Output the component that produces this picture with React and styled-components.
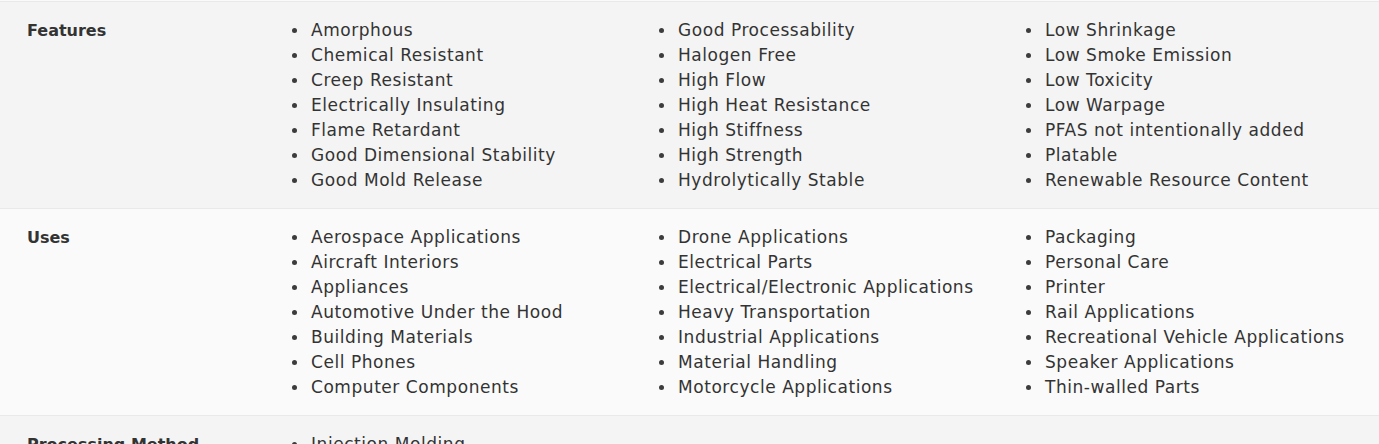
import React from 'react'
import styled, { createGlobalStyle } from 'styled-components'

const GlobalStyle = createGlobalStyle`
  html, body {
    margin: 0;
    padding: 0;
    background: #fafafa;
  }
  body {
    font-family: "DejaVu Sans", "Noto Sans", sans-serif;
    color: #333333;
  }
`

const Table = styled.div`
  padding-top: 1px;
  background: #fafafa;
`

const Row = styled.div`
  display: flex;
  align-items: flex-start;
  padding: 16px 27px 15px;
  border-top: 1px solid #e9e9e9;
  background: ${p => (p.$shade ? '#f4f4f4' : '#fafafa')};
`

const Label = styled.div`
  flex: 0 0 284px;
  font-size: 16px;
  line-height: 25px;
  font-weight: 600;
  color: #333333;
`

const List = styled.ul`
  margin: 0;
  padding: 0;
  list-style: none;
  display: grid;
  grid-template-columns: repeat(3, 367px);
  grid-template-rows: repeat(${p => p.$rows}, auto);
  grid-auto-flow: column;
`

const Item = styled.li`
  position: relative;
  font-size: 17px;
  line-height: 25px;
  letter-spacing: 0.55px;
  color: #333333;
  white-space: nowrap;

  &::before {
    content: "";
    position: absolute;
    left: -19.5px;
    top: 10px;
    width: 5px;
    height: 5px;
    border-radius: 50%;
    background: #3c3c3c;
  }
`

const sections = [
  {
    label: 'Features',
    items: [
      'Amorphous', 'Chemical Resistant', 'Creep Resistant', 'Electrically Insulating',
      'Flame Retardant', 'Good Dimensional Stability', 'Good Mold Release',
      'Good Processability', 'Halogen Free', 'High Flow', 'High Heat Resistance',
      'High Stiffness', 'High Strength', 'Hydrolytically Stable',
      'Low Shrinkage', 'Low Smoke Emission', 'Low Toxicity', 'Low Warpage',
      'PFAS not intentionally added', 'Platable', 'Renewable Resource Content',
    ],
  },
  {
    label: 'Uses',
    items: [
      'Aerospace Applications', 'Aircraft Interiors', 'Appliances',
      'Automotive Under the Hood', 'Building Materials', 'Cell Phones',
      'Computer Components', 'Drone Applications', 'Electrical Parts',
      'Electrical/Electronic Applications', 'Heavy Transportation',
      'Industrial Applications', 'Material Handling', 'Motorcycle Applications',
      'Packaging', 'Personal Care', 'Printer', 'Rail Applications',
      'Recreational Vehicle Applications', 'Speaker Applications', 'Thin-walled Parts',
    ],
  },
  {
    label: 'Processing Method',
    items: ['Injection Molding'],
  },
]

const App = () => {
  return (
    <>
      <GlobalStyle />
      <Table>
        {sections.map((s, i) => (
          <Row key={s.label} $shade={i % 2 === 0}>
            <Label>{s.label}</Label>
            <List $rows={Math.ceil(s.items.length / 3)}>
              {s.items.map(item => (
                <Item key={item}>{item}</Item>
              ))}
            </List>
          </Row>
        ))}
      </Table>
    </>
  )
}

export default App
